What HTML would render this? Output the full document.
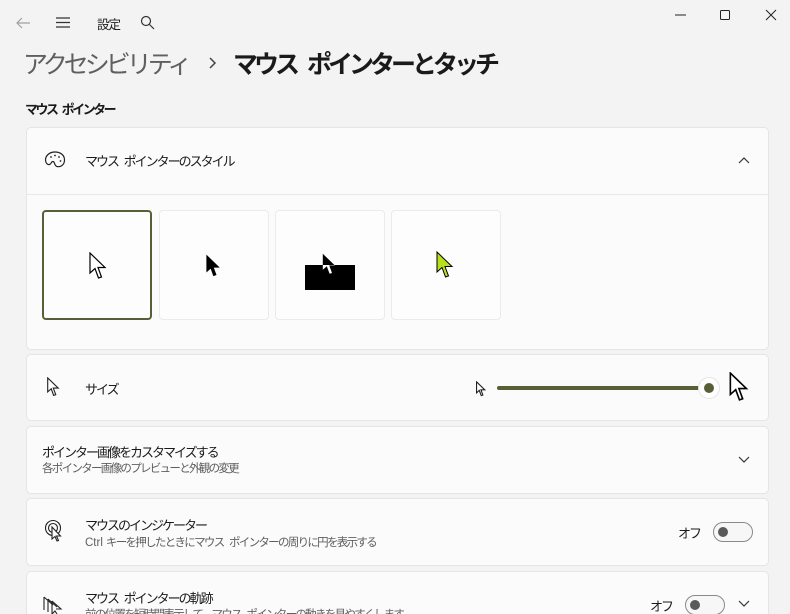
<!DOCTYPE html>
<html><head><meta charset="utf-8"><style>
*{margin:0;padding:0;box-sizing:border-box}
html,body{width:790px;height:614px;overflow:hidden}
body{background:#f3f3f3;font-family:"Liberation Sans","Noto Sans CJK JP",sans-serif;color:#1a1a1a;position:relative}
.a{position:absolute}
.card{position:absolute;left:26px;width:743px;background:#fbfbfb;border:1px solid #e5e5e5;border-radius:5px}
.t{font-size:13px;color:#1a1a1a;white-space:pre;letter-spacing:-2px;word-spacing:4px}
.s{font-size:11.5px;color:#5f5f5f;white-space:pre;letter-spacing:-1.7px;word-spacing:4px}
.l{letter-spacing:0;word-spacing:0;margin-right:3px}
.tile{position:absolute;top:210px;width:110px;height:110px;background:#fdfdfd;border:1px solid #ebebeb;border-radius:4px}
.tog{position:absolute;width:40px;height:20px;border:1px solid #8a8a8a;border-radius:10px;background:#f7f7f7}
.tog::after{content:"";position:absolute;left:4px;top:4px;width:10px;height:10px;border-radius:50%;background:#5a5a5a}
.h{font-size:25px;white-space:pre;letter-spacing:-4px;word-spacing:8px}
</style></head><body>
<svg class="a" style="left:14px;top:15px" width="18" height="16" viewBox="0 0 18 16"><path d="M16 8H3M8 3L3 8l5 5" fill="none" stroke="#a0a0a0" stroke-width="1.2"/></svg>
<svg class="a" style="left:55px;top:16px" width="16" height="13"><path d="M1 2H15M1 6.5H15M1 11H15" stroke="#333" stroke-width="1.2"/></svg>
<div class="a t" style="left:97px;top:14px;font-size:12.5px;letter-spacing:-1px">設定</div>
<svg class="a" style="left:140px;top:15px" width="15" height="15"><circle cx="6" cy="6" r="4.5" fill="none" stroke="#333" stroke-width="1.2"/><path d="M9.5 9.5L14 14" stroke="#333" stroke-width="1.2"/></svg>
<svg class="a" style="left:674px;top:9px" width="110" height="14"><path d="M1 6H12" stroke="#222"/><rect x="46.5" y="1.5" width="9" height="9" rx="1" fill="none" stroke="#222"/><path d="M92 1L102 11M102 1L92 11" stroke="#222"/></svg>
<div class="a h" style="left:23px;top:45px;color:#5f5f5f">アクセシビリティ</div>
<svg class="a" style="left:208px;top:56px" width="10" height="14"><path d="M2 2l5 5-5 5" fill="none" stroke="#444" stroke-width="1.5"/></svg>
<div class="a h" style="left:233px;top:45px;font-weight:bold">マウス ポインターとタッチ</div>
<div class="a t" style="left:25px;top:99px;font-weight:bold;letter-spacing:-2.5px">マウス ポインター</div>

<div class="card" style="top:127px;height:223px"></div>
<div class="a" style="left:27px;top:194px;width:741px;height:1px;background:#e8e8e8"></div>
<svg class="a" style="left:44px;top:150px" width="22" height="20" viewBox="0 0 22 20"><path d="M11 2C5 2 1.5 6 1.5 10c0 3 2 5 4 4.5 2-.5 1.5-3 3.5-3 2 0 1 4 4 5 4 1 7.5-2 7.5-6.5C20.5 5 16.5 2 11 2z" fill="none" stroke="#222" stroke-width="1.2"/><circle cx="7" cy="7" r=".9" fill="#222"/><circle cx="11" cy="5.5" r=".9" fill="#222"/><circle cx="15" cy="7" r=".9" fill="#222"/><circle cx="16.5" cy="11" r=".9" fill="#222"/></svg>
<div class="a t" style="left:85px;top:151px">マウス ポインターのスタイル</div>
<svg class="a" style="left:738px;top:156px" width="12" height="8"><path d="M1 7l5-5 5 5" fill="none" stroke="#333" stroke-width="1.2"/></svg>
<div class="tile" style="left:42px;border:2px solid #5a5e36"></div>
<div class="tile" style="left:159px"></div>
<div class="tile" style="left:275px"></div>
<div class="tile" style="left:391px"></div>
<svg class="a" style="left:89px;top:252px" width="20" height="28" viewBox="0 0 20 28"><path d="M1 1V21L6 16.5 9.5 26 12.5 25 9 15.5H16Z" fill="#fff" stroke="#000" stroke-width="1.2"/></svg>
<svg class="a" style="left:206px;top:254px" width="16" height="24" viewBox="0 0 20 28"><path d="M1 1V21L6 16.5 9.5 26 12.5 25 9 15.5H16Z" fill="#000" stroke="#000"/></svg>
<svg class="a" style="left:305px;top:253px" width="50" height="37" viewBox="0 0 50 37">
<defs><clipPath id="c"><rect x="0" y="12" width="50" height="25"/></clipPath></defs>
<rect x="0" y="12" width="50" height="25" fill="#000"/>
<g transform="translate(17,0) scale(0.8)"><path d="M1 1V21L6 16.5 9.5 26 12.5 25 9 15.5H16Z" fill="#000"/></g>
<g clip-path="url(#c)"><g transform="translate(17,0) scale(0.8)"><path d="M1 1V21L6 16.5 9.5 26 12.5 25 9 15.5H16Z" fill="#fff"/></g></g>
</svg>
<svg class="a" style="left:436px;top:251px" width="20" height="28" viewBox="0 0 20 28"><path d="M1 1V21L6 16.5 9.5 26 12.5 25 9 15.5H16Z" fill="#b8e01c" stroke="#000" stroke-width="1"/></svg>

<div class="card" style="top:354px;height:67px"></div>
<svg class="a" style="left:47px;top:377px" width="14" height="20" viewBox="0 0 20 28"><path d="M1 1V21L6 16.5 9.5 26 12.5 25 9 15.5H16Z" fill="#fff" stroke="#222" stroke-width="1.6"/></svg>
<div class="a t" style="left:85px;top:379px">サイズ</div>
<svg class="a" style="left:476px;top:381px" width="11" height="16" viewBox="0 0 20 28"><path d="M1 1V21L6 16.5 9.5 26 12.5 25 9 15.5H16Z" fill="#fff" stroke="#222" stroke-width="2"/></svg>
<div class="a" style="left:497px;top:386px;width:208px;height:4px;border-radius:2px;background:#5a5e36"></div>
<div class="a" style="left:698px;top:377px;width:22px;height:22px;border-radius:50%;background:#fff;border:1px solid #e5e5e5"></div>
<div class="a" style="left:704px;top:383px;width:10px;height:10px;border-radius:50%;background:#5a5e36"></div>
<svg class="a" style="left:729px;top:372px" width="22" height="30" viewBox="0 0 20 28"><path d="M1 1V21L6 16.5 9.5 26 12.5 25 9 15.5H16Z" fill="#fff" stroke="#000" stroke-width="1.5"/></svg>

<div class="card" style="top:426px;height:68px"></div>
<div class="a t" style="left:42px;top:442px">ポインター画像をカスタマイズする</div>
<div class="a s" style="left:42px;top:460px">各ポインター画像のプレビューと外観の変更</div>
<svg class="a" style="left:738px;top:456px" width="12" height="8"><path d="M1 1l5 5 5-5" fill="none" stroke="#333" stroke-width="1.2"/></svg>

<div class="card" style="top:498px;height:68px"></div>
<svg class="a" style="left:44px;top:519px" width="20" height="24" viewBox="0 0 20 24"><circle cx="9" cy="9" r="7.5" fill="none" stroke="#222" stroke-width="1.1"/><circle cx="9" cy="9" r="4.5" fill="none" stroke="#222" stroke-width="1.1"/><path d="M8 8V20L11 17.5 13 22 14.5 21.5 12.5 17H16.5Z" fill="#fbfbfb" stroke="#222" stroke-width="1.1"/></svg>
<div class="a t" style="left:85px;top:515px">マウスのインジケーター</div>
<div class="a s" style="left:85px;top:534px"><span class="l">Ctrl</span>キーを押したときにマウス ポインターの周りに円を表示する</div>
<div class="a t" style="left:678px;top:523px">オフ</div>
<div class="tog" style="left:713px;top:522px"></div>

<div class="card" style="top:571px;height:50px"></div>
<svg class="a" style="left:43px;top:596px" width="24" height="18" viewBox="0 0 24 18"><path d="M1 1V14M1 1L10 9M5 3V16M5 3L14 11M9 5V18L12 15 14 18M9 5L18 13H13" fill="none" stroke="#222" stroke-width="1.1"/></svg>
<div class="a t" style="left:85px;top:588px">マウス ポインターの軌跡</div>
<div class="a s" style="left:85px;top:606px">前の位置を短時間表示して、マウス ポインターの動きを見やすくします</div>
<div class="a t" style="left:650px;top:596px">オフ</div>
<div class="tog" style="left:685px;top:595px"></div>
<svg class="a" style="left:738px;top:600px" width="12" height="8"><path d="M1 1l5 5 5-5" fill="none" stroke="#333" stroke-width="1.2"/></svg>
</body></html>
